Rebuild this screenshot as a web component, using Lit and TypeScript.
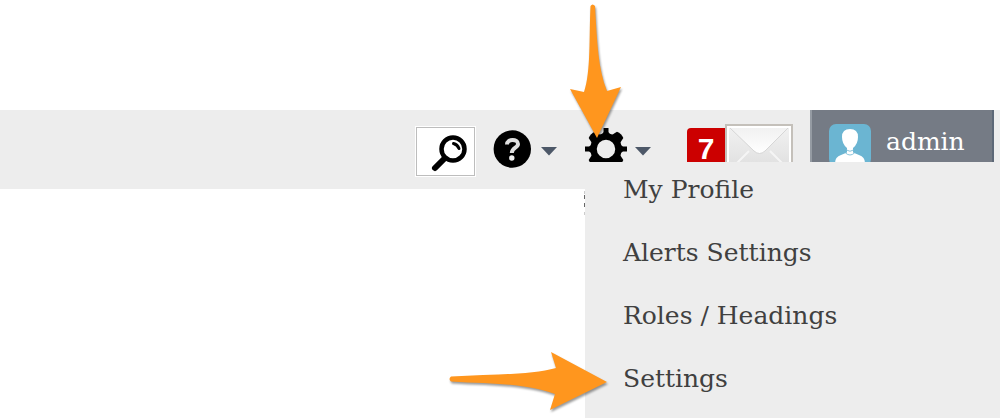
import { LitElement, html, css, svg } from "lit";
import { customElement, property } from "lit/decorators.js";

const caret = html`<svg class="caret" width="16" height="9" viewBox="0 0 16 9" aria-hidden="true">
  <path d="M0 0H16L8 8.500Z" fill="#4d5868" />
</svg>`;

@customElement("settings-menu")
class SettingsMenu extends LitElement {
  @property({ attribute: false }) items: string[] = [];

  static styles = css`
    :host {
      display: block;
      background: #ededed;
    }
    .list {
      list-style: none;
      margin: 0;
      padding: 0 0 7px 38px;
    }
    .item {
      height: 63px;
    }
    .link {
      display: block;
      font: 25px/56px "DejaVu Serif", serif;
      color: #404040;
      text-decoration: none;
      white-space: nowrap;
    }
    .marks {
      position: absolute;
      right: 100%;
      top: 28px;
      width: 1px;
      height: 26px;
    }
  `;

  render() {
    return html`
      <svg class="marks" viewBox="0 0 1 26" aria-hidden="true">
        <path d="M0 1h1v3H0zM0 22h1v3H0z" fill="#ccc" />
        <path d="M0 5h1v4H0zM0 13h1v4H0z" fill="#666" />
      </svg>
      <ul class="list">
        ${this.items.map((t) => html`<li class="item"><a class="link" href="#">${t}</a></li>`)}
      </ul>
    `;
  }
}

@customElement("app-root")
export class AppRoot extends LitElement {
  static styles = css`
    :host {
      display: block;
      position: relative;
      min-height: 100vh;
      box-sizing: border-box;
      padding-top: 110px;
      overflow: hidden;
      background: #fff;
    }
    .bar {
      display: flex;
      justify-content: flex-end;
      align-items: flex-start;
      height: 79px;
      padding-right: 6px;
      background: #ededed;
    }
    button {
      display: flex;
      align-items: center;
      margin: 0;
      padding: 0;
      border: 0;
      background: none;
    }
    svg {
      display: block;
      flex: none;
    }
    .search {
      box-sizing: border-box;
      width: 59px;
      height: 49px;
      margin: 17px 18px 0 0;
      border: 1px solid #bdbdbd;
      outline: 1px solid #fff;
      background: #fff;
    }
    .tool {
      height: 42px;
      margin-top: 18px;
    }
    .help {
      gap: 9px;
      margin-right: 28px;
    }
    .gear {
      gap: 8px;
      margin-right: 36px;
    }
    .caret {
      margin-top: 4px;
    }
    .mail {
      align-items: flex-start;
      margin: 14px 16px 0 0;
    }
    .count {
      box-sizing: border-box;
      width: 38px;
      height: 42px;
      margin-top: 4px;
      border-radius: 4px 0 0 4px;
      background: #c00;
      color: #fff;
      font: bold 30px/42px "Liberation Sans", sans-serif;
      text-align: center;
    }
    .user {
      box-sizing: border-box;
      align-items: flex-start;
      gap: 15px;
      width: 184px;
      height: 79px;
      padding: 14px 0 0 17px;
      border-left: 2px solid #959ba3;
      border-right: 2px solid #5d6877;
      background: #757b85;
      color: #fff;
    }
    .name {
      font: 25px/36px "DejaVu Serif", serif;
    }
    .menu {
      position: absolute;
      top: 162px;
      right: 0;
      width: 415px;
      min-height: calc(100% - 162px);
    }
    .pointer {
      position: absolute;
      filter: drop-shadow(1px 2px 1px rgba(0, 0, 0, 0.4));
      pointer-events: none;
      overflow: visible;
    }
    .down {
      top: 4px;
      right: 378px;
    }
    .across {
      top: 352px;
      right: 393px;
    }
  `;

  render() {
    return html`
      <header class="bar">
        <button class="search" aria-label="Search">
          <svg width="57" height="47" viewBox="0 0 57 47">
            <path d="M28 30L18 40" stroke="#000" stroke-width="6" stroke-linecap="round" />
            <circle cx="36" cy="21" r="11.500" fill="#fff" stroke="#000" stroke-width="4.500" />
            <path d="M36.500 15.500Q40.500 16.500 42 20.500" fill="none" stroke="#000" stroke-width="3" stroke-linecap="round" />
          </svg>
        </button>
        <button class="tool help" aria-label="Help">
          <svg width="39" height="42" viewBox="0 0 39 42">
            <circle cx="19.300" cy="21" r="18.700" />
            <path d="M14 16.500C14 10.500 25 10.500 25 16C25 20 19 19.500 18.800 25" fill="none" stroke="#e0e0e0" stroke-width="4" />
            <circle cx="18.800" cy="30" r="2.700" fill="#f0f0f0" />
          </svg>
          ${caret}
        </button>
        <button class="tool gear" aria-label="Settings menu" aria-expanded="true">
          <svg width="42" height="42" viewBox="0 0 42 42">
            ${[0, 90, 180, 270].map(
              (a) => svg`<path d="M16 8L18.500 4V-1H23.500V4L26 8Z" transform=${`rotate(${a} 21 21)`} />
                <path d="M15 8L16.500 1Q21 -1 25.500 1L27 8Z" transform=${`rotate(${a + 45} 21 21)`} />`
            )}
            <circle cx="21" cy="21" r="12.500" fill="none" stroke="#000" stroke-width="6.500" />
          </svg>
          ${caret}
        </button>
        <button class="mail" aria-label="7 unread messages">
          <span class="count">7</span>
          <svg width="69" height="48" viewBox="0 0 69 48">
            <defs>
              <linearGradient id="paper" x2="0" y2="1">
                <stop stop-color="#f2f2f2" />
                <stop offset="1" stop-color="#dedede" />
              </linearGradient>
              <linearGradient id="flap" x2="0" y2="1">
                <stop stop-color="#f1f1f1" />
                <stop offset="1" stop-color="#fff" />
              </linearGradient>
            </defs>
            <path d="M1 1H67V48H1Z" fill="url(#paper)" stroke="#c4c0ba" stroke-width="2" />
            <path d="M3 48V3H65V48" fill="none" stroke="#fff" stroke-width="2" />
            <path d="M12 39L24 27M57 39L45 27" stroke="#f5f5f5" stroke-width="2" />
            <path d="M5 4L29 27Q34.500 32 40 27L63 4Z" fill="url(#flap)" />
            <path d="M5 4L29 27Q34.500 32 40 27L63 4" fill="none" stroke="#d6d6d6" />
          </svg>
        </button>
        <button class="user">
          <svg width="42" height="42" viewBox="0 0 42 42" aria-hidden="true">
            <rect width="42" height="42" rx="7" fill="#6bb5d2" />
            <path d="M6 42V39Q6 33 12 31L18 28.500V24Q13 20 13 13Q13 5 21 5Q29 5 29 13Q29 20 24 24V28.500L30 31Q36 33 36 39V42Z" fill="#fff" />
            <path d="M17.500 26Q21 28.500 24.500 26M16.500 29Q21 33 25.500 29" fill="none" stroke="#8ac3da" />
          </svg>
          <span class="name">admin</span>
        </button>
      </header>
      <settings-menu
        class="menu"
        .items=${["My Profile", "Alerts Settings", "Roles / Headings", "Settings"]}
      ></settings-menu>
      <svg class="pointer down" width="52" height="134" viewBox="0 0 52 134" aria-hidden="true">
        <path d="M20.500 2Q22.500 -1 25 2C27 37 28 65 37 87L51 83L27 134L0 85L14 88C21 68 19 32 20.500 2Z" fill="#ff961e" />
      </svg>
      <svg class="pointer across" width="158" height="58" viewBox="0 0 158 58" aria-hidden="true">
        <path d="M2 24.500Q-1 27 2 29.500C43 32 77 31 106 42L101 58L158 30L102 0L107 16C83 23 43 22 2 24.500Z" fill="#ff961e" />
      </svg>
    `;
  }
}
